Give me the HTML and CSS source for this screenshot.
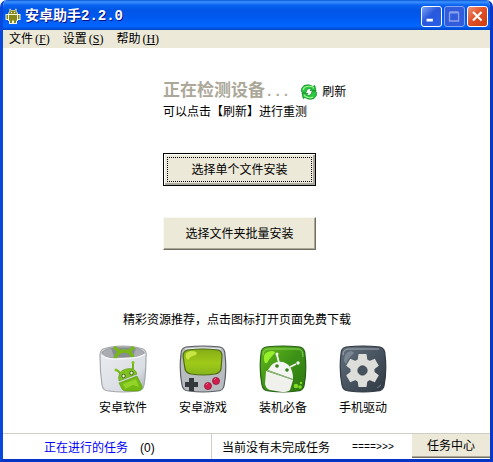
FILE: index.html
```html
<!DOCTYPE html>
<html lang="zh-CN">
<head>
<meta charset="utf-8">
<title>安卓助手2.2.0</title>
<link rel="stylesheet" href="styles.css">
</head>
<body>
<div class="window">
  <header class="titlebar">
    <svg class="app-icon" viewBox="0 0 16 16" aria-hidden="true">
      <path d="M4.500 1l2 3M11.500 1l-2 3" stroke="#f4f5dc" stroke-width="1.600"/>
      <path d="M3 6q1-4 5-4t5 4h2.500v6H13v1h-1v3H4v-3H3v-1H.5V6z" fill="#f4f5dc"/>
      <path d="M4.500 1l1.500 2.500M11.500 1L10 3.500" stroke="#85881b" stroke-width=".8"/>
      <path d="M4 6q0-3.500 4-3.500T12 6zM4 7h8v5.500h-1V15H9v-2.500H7V15H5v-2.500H4zM1.500 7H3v4H1.500zM13 7h1.500v4H13z" fill="#85881b"/>
      <path d="M6 4h1v1H6zM9 4h1v1H9z" fill="#fff"/>
    </svg>
    <h1 class="title">安卓助手2.2.0</h1>
    <div class="controls">
      <button class="control" type="button" aria-label="最小化"><svg viewBox="0 0 21 21"><path d="M5 13h7v3H5z" fill="#fff"/></svg></button>
      <button class="control control-off" type="button" aria-label="最大化" disabled><svg viewBox="0 0 21 21"><path d="M5 6.500h10v9H5zM5 5.500h10" fill="none" stroke="#8da0ea" stroke-width="1.500"/></svg></button>
      <button class="control control-close" type="button" aria-label="关闭"><svg viewBox="0 0 21 21"><path d="M5.500 5.500l9.500 9.500M15 5.500L5.500 15" stroke="#fff" stroke-width="2.400"/></svg></button>
    </div>
  </header>
  <nav class="menu">
    <button class="menu-item" type="button">文件<span class="key">(<u>F</u>)</span></button>
    <button class="menu-item" type="button">设置<span class="key">(<u>S</u>)</span></button>
    <button class="menu-item" type="button">帮助<span class="key">(<u>H</u>)</span></button>
  </nav>
  <main class="content">
    <section class="device">
      <div class="detect">
        <h2 class="state">正在检测设备<span class="dots">...</span></h2>
        <button class="refresh" type="button">
          <svg viewBox="0 0 16 16" aria-hidden="true">
            <g fill="#2bc840" stroke="#087c20" stroke-width=".7" stroke-linejoin="round">
              <path d="M.6 8V4.500L3 1.500Q8-.6 12 2.500L13.800 1.500L15 7L9 6.500L10.500 5Q8 3.800 6 5.500L5 8.500L3 9.500z"/>
              <path d="M15.400 8V11.500L13 14.500Q8 16.600 4 13.500L2.200 14.500L1 9L7 9.500L5.500 11Q8 12.200 10 10.500L11 7.500L13 6.500z"/>
            </g>
            <path d="M2 6Q3 2.200 8 2.200T12.500 4.500M3 11l1 1Q8 15 12 13" fill="none" stroke="#9df58e" stroke-width="1.100"/>
          </svg>
          刷新
        </button>
      </div>
      <p class="hint">可以点击【刷新】进行重测</p>
      <button class="install install-default" type="button">选择单个文件安装</button>
      <button class="install" type="button">选择文件夹批量安装</button>
    </section>
    <section class="resources">
      <p class="lead">精彩资源推荐，点击图标打开页面免费下载</p>
      <div class="links">
        <a class="link" href="#apps">
          <svg viewBox="0 0 48 48" aria-hidden="true">
            <defs>
              <linearGradient id="bag" x2="1" y2="1"><stop stop-color="#eceef3"/><stop offset=".7" stop-color="#dadde3"/><stop offset="1" stop-color="#a9adb3"/></linearGradient>
            </defs>
            <path d="M4 4Q13 1 24 1T44 4Q48 6 47 12Q47 28 45 40Q44 46 38 46Q24 48 10 46Q4 46 3 40Q1 26 1 11Q1 6 4 4z" fill="url(#bag)" stroke="#a4a7ab" stroke-width="1.200"/>
            <path d="M3 7Q8 2 24 2T45 7Q47 12 36 12Q24 14 12 13Q2 12 3 7z" fill="#a9adb1" stroke="#85898c" stroke-width=".7"/>
            <path d="M12 3h25l-3 9H15z" fill="#878d90"/>
            <path d="M16 14Q18 6 25 6T34 13M15 2l6 5M35 2l-6 5" fill="none" stroke="#79b719" stroke-width="3.500"/>
            <path d="M3 10q4 4 12 4t18-1 13-4" fill="none" stroke="#f6f7f9" stroke-width="1.500"/>
            <path d="M22 29l-4-4M34 24V18" stroke="#74b51b" stroke-width="2"/>
            <circle cx="17" cy="25" r="1.500" fill="#81c51d"/><circle cx="34" cy="17.500" r="1.500" fill="#81c51d"/>
            <path d="M20 36Q18 26 27 24T38 29z" fill="#7fc21d" stroke="#5e9813" stroke-width=".6"/>
            <path d="M20 38L38 31L43 41Q44 44 40 46H28Q24 46 23 44z" fill="#72ba13" stroke="#5e9813" stroke-width=".6"/>
            <path d="M24 39l13-5 3 8-6-2-8 4z" fill="#a4df34" opacity=".65"/>
            <circle cx="24.500" cy="31" r="1.800" fill="#e8f0dd" stroke="#426b1f"/><circle cx="32.500" cy="28" r="1.800" fill="#e8f0dd" stroke="#426b1f"/>
          </svg>
          安卓软件
        </a>
        <a class="link" href="#games">
          <svg viewBox="0 0 48 48" aria-hidden="true">
            <defs><linearGradient id="screen" x2="0" y2="1"><stop stop-color="#86ad16"/><stop offset=".55" stop-color="#9fca19"/><stop offset="1" stop-color="#86b31b"/></linearGradient></defs>
            <path d="M7 2Q24 0 41 2Q46 3 46 10Q48 25 45 41Q44 46 38 46Q24 48 10 46Q4 46 3 40Q0 24 2 9Q2 3 7 2z" fill="#b8bbc0" stroke="#585c61" stroke-width="1.200"/>
            <path d="M6 4Q24 2 42 4" fill="none" stroke="#eff1f3"/>
            <path d="M9 5Q24 3 39 5Q43 6 43 11L42 24Q41 28 36 29Q24 31 12 29Q7 28 6 24L4 11Q4 6 9 5z" fill="url(#screen)" stroke="#4c6c18" stroke-width="1.200"/>
            <path d="M7 13Q5 7 12 6Q20 6 17 10Q11 11 9 15z" fill="#dcf453" opacity=".75"/>
            <path d="M10 33h5v4h4v5h-4v4h-5v-4H6v-5h4z" fill="#34393e"/>
            <circle cx="29" cy="41" r="3.500" fill="#d51b4b" stroke="#8e173b" stroke-width=".8"/><circle cx="37" cy="36" r="3.500" fill="#d51b4b" stroke="#8e173b" stroke-width=".8"/>
            <path d="M27 40l2-2M35 35l2-2" stroke="#f17494"/>
          </svg>
          安卓游戏
        </a>
        <a class="link" href="#essentials">
          <svg viewBox="0 0 48 48" aria-hidden="true">
            <defs><linearGradient id="leaf" x2="1" y2="1"><stop stop-color="#68b91a"/><stop offset=".5" stop-color="#3c9217"/><stop offset="1" stop-color="#2e760f"/></linearGradient></defs>
            <path d="M7 2Q24 0 41 2Q46 3 46 10Q48 25 45 41Q44 46 38 46Q24 48 10 46Q4 46 3 40Q0 24 2 9Q2 3 7 2z" fill="url(#leaf)" stroke="#245f16" stroke-width="1.200"/>
            <path d="M4 10Q4 4 10 4H40Q44 5 44 12" fill="none" stroke="#8bd35b"/>
            <path d="M5 14Q4 7 12 6Q19 6 14 10Q10 14 8 18Q5 19 5 14z" fill="#98ef2c"/>
            <path d="M20 18l-2-8M31 22l6-3" stroke="#f5f5f3" stroke-width="1.800"/>
            <circle cx="18" cy="9" r="1.500" fill="#f5f5f3"/><circle cx="39" cy="18" r="1.700" fill="#f5f5f3"/>
            <path d="M9 25Q14 15 24 17Q34 20 34 34z" fill="#f4f4f2"/>
            <path d="M7 26L34 35L31 45Q29 47 23 47L11 45Q7 44 6 39Z" fill="#f0f0ed"/>
            <path d="M8 25.500L34 34.500" stroke="#a9bd9f" stroke-width=".8"/>
            <circle cx="18" cy="21" r="1.800" fill="#358014"/><circle cx="28" cy="25" r="1.800" fill="#358014"/>
            <circle cx="37" cy="41" r="2.300" fill="#81dc25"/><circle cx="41" cy="42" r="1.800" fill="#81dc25"/><circle cx="42" cy="38" r="1.200" fill="#81dc25"/>
          </svg>
          装机必备
        </a>
        <a class="link" href="#drivers">
          <svg viewBox="0 0 48 48" aria-hidden="true">
            <defs><linearGradient id="steel" x2="1" y2="1"><stop stop-color="#64717f"/><stop offset=".5" stop-color="#47535f"/><stop offset="1" stop-color="#303943"/></linearGradient></defs>
            <path d="M7 2Q24 0 41 2Q46 3 46 10Q48 25 45 41Q44 46 38 46Q24 48 10 46Q4 46 3 40Q0 24 2 9Q2 3 7 2z" fill="url(#steel)" stroke="#303841" stroke-width="1.200"/>
            <path d="M4 10Q4 4 10 4H40" fill="none" stroke="#a1abb4"/>
            <path d="M5 16Q5 7 12 6Q17 7 13 10T7 19z" fill="#7a8793"/>
            <g fill="#dddeda">
              <circle cx="23.500" cy="25.500" r="12"/>
              <path id="teeth" d="M19.500 9h8l1 7v19l-1 7h-8l-1-7V16z"/>
              <use href="#teeth" transform="rotate(60 23.500 25.500)"/>
              <use href="#teeth" transform="rotate(120 23.500 25.500)"/>
            </g>
            <circle cx="23.500" cy="25.500" r="4.700" fill="#46525d" stroke="#303a45" stroke-width=".7"/>
            <path d="M38 43l4-3" stroke="#75818b"/>
          </svg>
          手机驱动
        </a>
      </div>
    </section>
  </main>
  <footer class="status">
    <div class="running"><a class="tasks" href="#tasks">正在进行的任务</a><span>(0)</span></div>
    <div class="pending"><span>当前没有未完成任务</span><span class="arrow">====&gt;&gt;&gt;</span></div>
    <button class="center" type="button">任务中心</button>
  </footer>
</div>
</body>
</html>
```
FILE: styles.css
```css
* { box-sizing: border-box; }

body {
  margin: 0;
  background: #fff;
  color: #000;
  font: 12px/16px "Liberation Sans", "Noto Sans CJK SC", sans-serif;
}

h1, h2, p { margin: 0; }
button { font: inherit; color: inherit; padding: 0; border: 0; background: none; }
svg { display: block; }

.window {
  display: flex;
  flex-direction: column;
  min-height: 100vh;
  border: 3px solid #0848dc;
  border-top: 0;
  border-radius: 7px 7px 0 0;
  border-right-color: #0838c8;
  border-bottom-color: #0634c4;
  overflow: hidden;
}

.titlebar {
  display: flex;
  align-items: center;
  height: 30px;
  margin: 0 -3px;
  padding: 2px 5px 0 5px;
  background: linear-gradient(#0a58d8 0, #3c92ff 2px, #0a64f0 5px, #0055e5 10px, #005cf4 20px, #0066ff 26px, #0046c8 30px);
}

.app-icon { width: 16px; height: 16px; }

.title {
  flex: 1;
  margin-left: 4px;
  color: #fff;
  font: bold 14px/20px "Liberation Mono", "Noto Sans CJK SC", monospace;
  text-shadow: 1px 1px #0f1089;
}

.controls { display: flex; gap: 2px; }

.control {
  width: 21px;
  height: 21px;
  border: 1px solid #fff;
  border-radius: 3px;
  background: linear-gradient(135deg, #7ba2f3, #2858dc 45%, #2860e8);
}

.control svg { width: 19px; height: 19px; }
.control-off { border-color: #88a4ef; background: #315cdc; }
.control-close { background: linear-gradient(135deg, #ef9476, #e15028 45%, #cc3c10); }

.menu {
  display: flex;
  gap: 13px;
  height: 18px;
  padding: 1px 6px 0;
  background: #ece9d8;
}

.menu-item { display: flex; }
.key { padding-left: 2px; font-family: "Liberation Serif", serif; }

.content { flex: 1; }

.device {
  display: flex;
  flex-direction: column;
  align-items: flex-start;
  padding: 32px 0 0 160px;
}

.detect { display: flex; align-items: center; gap: 11px; height: 20px; }
.state { color: #aca899; font: bold 17px/20px "Noto Sans CJK SC", sans-serif; }
.dots { font-family: "Liberation Mono", monospace; font-size: 14px; }
.refresh { display: flex; align-items: center; gap: 5px; padding-top: 3px; }
.refresh svg { width: 16px; height: 16px; }
.hint { margin: 4px 0 33px; }

.install {
  width: 153px;
  height: 33px;
  margin-bottom: 31px;
  border: 1px solid;
  border-color: #f8f7f0 #716f64 #716f64 #f8f7f0;
  box-shadow: inset -1px -1px #aca899;
  background: #ece9d8;
}

.install-default {
  border-color: #000;
  box-shadow: inset 1px 1px #fff, inset -2px -2px #aca899;
  outline: 1px dotted #000;
  outline-offset: -5px;
}

.resources { padding: 31px 0 16px; }
.lead { padding-left: 120px; }
.links { display: flex; gap: 32px; margin: 17px 0 0 96px; }

.link {
  display: flex;
  flex-direction: column;
  gap: 7px;
  color: #000;
  text-decoration: none;
}

.link svg { width: 48px; height: 48px; }

.status {
  display: flex;
  height: 26px;
  border-top: 1px solid #d0cec4;
}

.running {
  display: flex;
  gap: 12px;
  width: 209px;
  padding: 6px 0 0 41px;
  border-right: 1px solid #d0cec4;
}

.tasks { color: #00f; text-decoration: none; }
.pending { display: flex; flex: 1; gap: 22px; padding: 6px 0 0 10px; }
.arrow { font-family: "Liberation Mono", monospace; font-size: 10px; }

.center {
  width: 78px;
  height: 24px;
  border-bottom: 1px solid #716f64;
  box-shadow: inset 0 -1px #aca899;
  background: #ece9d8;
}
```
